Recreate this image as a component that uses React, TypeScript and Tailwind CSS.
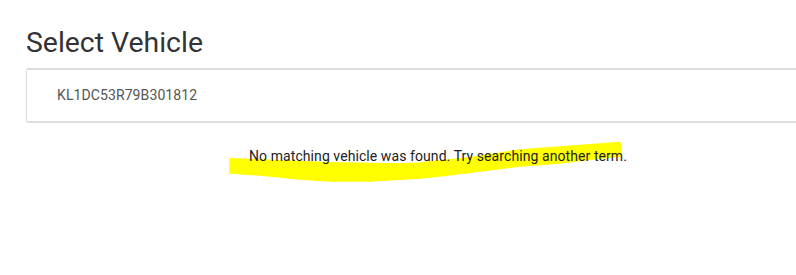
export default function App() {
  return (
    <div className="w-[796px] h-[275px] overflow-hidden bg-white" style={{ fontFamily: "Roboto, 'Liberation Sans', sans-serif" }}>
      <div className="w-[824px] ml-[26px] pt-[26px]">
        <h1 className="text-[28.4px] leading-[34px] text-[#333] font-normal">Select Vehicle</h1>
        <div className="mt-[8px] h-[55px] flex items-center border-y-2 border-l border-[#dedede] rounded-[2px] pl-[30px]">
          <span className="text-[14px] tracking-[0.1px] text-[#555]">KL1DC53R79B301812</span>
        </div>
        <div className="relative mt-[25px] flex justify-center">
          {/* marker scribble under the message */}
          <svg className="absolute left-[202px] top-[-7px]" width="400" height="45" viewBox="0 0 400 45">
            <path
              d="M2 17.7 L32 19 L102 21.7 L172 23 L192 22 L242 16.7 L292 9 L332 6 L372 3 L392 1.5 L393 15 L372 17 L332 22 L292 25 L252 30 L212 35 L192 37 L142 40 L102 40 L72 38 L32 34 L2 32 Z"
              fill="#ffff00"
              stroke="#ffff00"
              strokeWidth="1.5"
              strokeLinejoin="round"
            />
          </svg>
          <p className="relative text-[14px] leading-[16px] tracking-[0.08px] text-[#222]">No matching vehicle was found. Try searching another term.</p>
        </div>
      </div>
    </div>
  );
}
